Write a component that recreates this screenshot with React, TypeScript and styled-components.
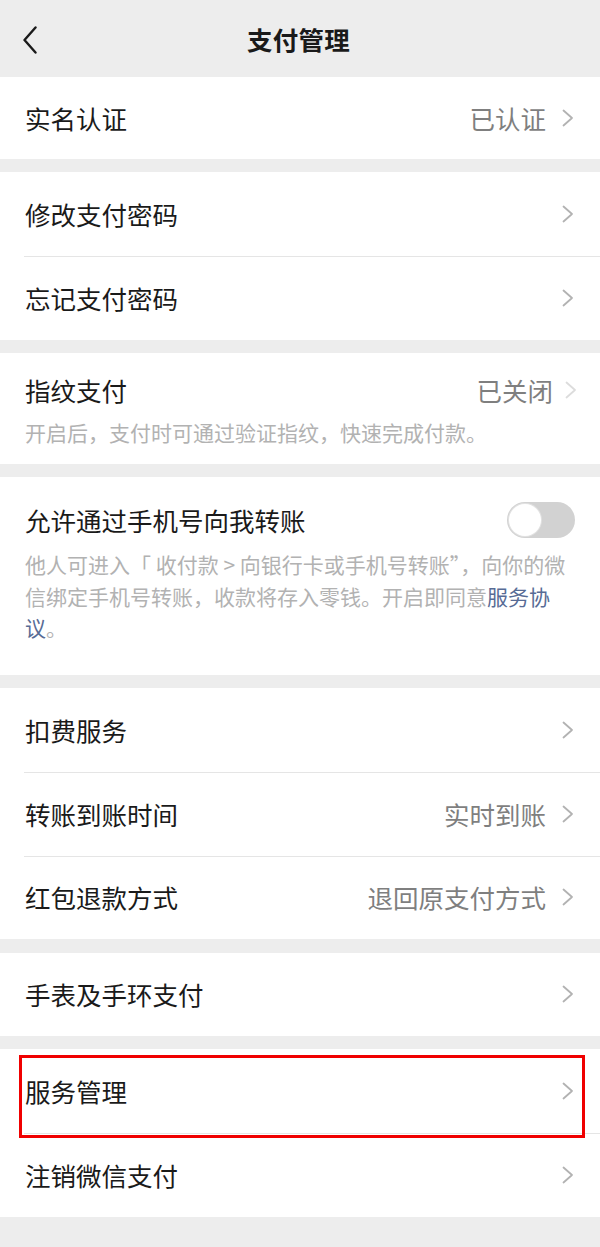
import { FC } from "react";
import styled, { createGlobalStyle } from "styled-components";

const GlobalStyle = createGlobalStyle`
  html, body {
    margin: 0;
    padding: 0;
    background: #ededed;
  }
  body {
    font-family: "Noto Sans CJK SC", "Noto Sans", sans-serif;
    -webkit-font-smoothing: antialiased;
  }
`;

const BackIcon: FC = () => (
  <svg width="16" height="28" viewBox="0 0 16 28" fill="none">
    <path d="M13.5 1.5 L2.5 14 L13.5 26.5" stroke="#1a1a1a" strokeWidth="2.4" strokeLinecap="round" strokeLinejoin="round" />
  </svg>
);

const Chevron: FC<{ faded?: boolean }> = ({ faded }) => (
  <svg width="12" height="18" viewBox="0 0 12 18" fill="none">
    <path
      d="M1.5 1.5 L10 9 L1.5 16.5"
      stroke={faded ? "#dcdcdc" : "#b2b2b2"}
      strokeWidth="1.8"
      strokeLinecap="round"
      strokeLinejoin="round"
    />
  </svg>
);

type RowProps = {
  title: string;
  value?: string;
  first?: boolean;
};

const Row: FC<RowProps> = ({ title, value, first }) => (
  <RowItem $short={first}>
    <RowTitle>{title}</RowTitle>
    <RowRight>
      {value && <RowValue>{value}</RowValue>}
      <Chevron />
    </RowRight>
  </RowItem>
);

const App: FC = () => {
  return (
    <>
      <GlobalStyle />
      <Page>
        <Header>
          <BackButton>
            <BackIcon />
          </BackButton>
          <HeaderTitle>支付管理</HeaderTitle>
        </Header>

        <Group>
          <Row title="实名认证" value="已认证" first />
        </Group>

        <Group>
          <Row title="修改支付密码" />
          <Row title="忘记支付密码" />
        </Group>

        <Group>
          <Block $top={20} $bottom={15.5}>
            <BlockHead>
              <RowTitle>指纹支付</RowTitle>
              <RowRight $tight>
                <RowValue>已关闭</RowValue>
                <Chevron faded />
              </RowRight>
            </BlockHead>
            <Desc $gap={10}>开启后，支付时可通过验证指纹，快速完成付款。</Desc>
          </Block>
        </Group>

        <Group>
          <Block $top={26} $bottom={31.5}>
            <BlockHead>
              <RowTitle>允许通过手机号向我转账</RowTitle>
              <Toggle>
                <Knob />
              </Toggle>
            </BlockHead>
            <Desc $gap={12}>
              他人可进入「 收付款 &gt; 向银行卡或手机号转账”，向你的微
              <br />
              信绑定手机号转账，收款将存入零钱。开启即同意<Link>服务协</Link>
              <br />
              <Link>议</Link>。
            </Desc>
          </Block>
        </Group>

        <Group>
          <Row title="扣费服务" />
          <Row title="转账到账时间" value="实时到账" />
          <Row title="红包退款方式" value="退回原支付方式" />
        </Group>

        <Group>
          <Row title="手表及手环支付" />
        </Group>

        <Group>
          <Row title="服务管理" />
          <Row title="注销微信支付" />
          <Highlight />
        </Group>
      </Page>
    </>
  );
};

const Page = styled.div`
  width: 600px;
  min-height: 1247px;
  background: #ededed;
  display: flex;
  flex-direction: column;
  gap: 13.25px;
`;

const Header = styled.div`
  height: 77px;
  margin-bottom: -13.25px;
  display: flex;
  align-items: center;
  justify-content: center;
  position: relative;
`;

const BackButton = styled.div`
  position: absolute;
  left: 22px;
  top: 26px;
  display: flex;
`;

const HeaderTitle = styled.div`
  font-size: 25.5px;
  font-weight: 700;
  color: #1a1a1a;
  letter-spacing: 0.3px;
  margin-left: -3px;
`;

const Group = styled.div`
  background: #fff;
  position: relative;
`;

const RowItem = styled.div<{ $short?: boolean }>`
  height: ${(p) => (p.$short ? 82 : 83.67)}px;
  display: flex;
  align-items: center;
  justify-content: space-between;
  padding: 0 26px 0 25px;
  position: relative;

  & + &::before {
    content: "";
    position: absolute;
    top: 0;
    left: 24px;
    right: 0;
    height: 1px;
    background: #e5e5e5;
  }
`;

const RowTitle = styled.div`
  font-size: 25.5px;
  line-height: 34px;
  color: #1a1a1a;
`;

const RowRight = styled.div<{ $tight?: boolean }>`
  display: flex;
  align-items: center;
  gap: ${(p) => (p.$tight ? 12 : 16)}px;
  margin-right: ${(p) => (p.$tight ? -3 : 0)}px;
`;

const RowValue = styled.div`
  font-size: 25.5px;
  line-height: 34px;
  color: #7f7f7f;
`;

const Block = styled.div<{ $top: number; $bottom: number }>`
  padding: ${(p) => p.$top}px 24px ${(p) => p.$bottom}px 25px;
`;

const BlockHead = styled.div`
  display: flex;
  align-items: center;
  justify-content: space-between;
  height: 34px;
  padding-right: 2px;
`;

const Desc = styled.div<{ $gap: number }>`
  margin-top: ${(p) => p.$gap}px;
  font-size: 21px;
  line-height: 31.5px;
  color: #b2b2b2;
  white-space: nowrap;
`;

const Link = styled.span`
  color: #576b95;
`;

const Toggle = styled.div`
  width: 68px;
  height: 36px;
  border-radius: 18px;
  background: #d2d2d2;
  display: flex;
  align-items: center;
  padding: 0 2px;
  box-sizing: border-box;
  margin-right: -1px;
`;

const Knob = styled.div`
  width: 32px;
  height: 32px;
  border-radius: 50%;
  background: #fff;
  box-shadow: 0 0 0 1px #e2e2e2;
`;

const Highlight = styled.div`
  position: absolute;
  left: 19px;
  top: 6px;
  width: 566px;
  height: 83px;
  border: 3px solid #f00000;
  box-sizing: border-box;
  pointer-events: none;
`;

export default App;
